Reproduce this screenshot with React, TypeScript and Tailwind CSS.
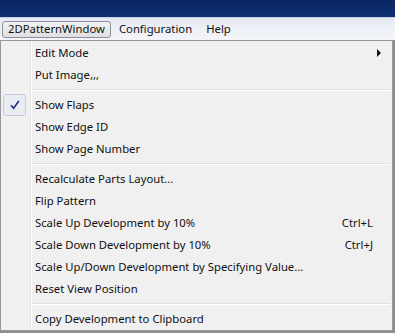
import React from "react";

type Item =
  | { kind: "item"; label: string; shortcut?: string; sub?: boolean; checked?: boolean }
  | { kind: "sep" };

const items: Item[] = [
  { kind: "item", label: "Edit Mode", sub: true },
  { kind: "item", label: "Put Image,,," },
  { kind: "sep" },
  { kind: "item", label: "Show Flaps", checked: true },
  { kind: "item", label: "Show Edge ID" },
  { kind: "item", label: "Show Page Number" },
  { kind: "sep" },
  { kind: "item", label: "Recalculate Parts Layout..." },
  { kind: "item", label: "Flip Pattern" },
  { kind: "item", label: "Scale Up Development by 10%", shortcut: "Ctrl+L" },
  { kind: "item", label: "Scale Down Development by 10%", shortcut: "Ctrl+J" },
  { kind: "item", label: "Scale Up/Down Development by Specifying Value..." },
  { kind: "item", label: "Reset View Position" },
  { kind: "sep" },
  { kind: "item", label: "Copy Development to Clipboard" },
];

export default function App() {
  return (
    <div
      className="relative w-[395px] h-[333px] overflow-hidden bg-[#8e8e8e] text-[11.3px] text-[#111]"
      style={{ fontFamily: '"Noto Sans", "Open Sans", sans-serif' }}
    >
      {/* title bar */}
      <div className="h-[17px] bg-gradient-to-b from-[#0b2763] to-[#0e3073]" />
      {/* menu bar */}
      <div className="h-[23px] flex items-center bg-gradient-to-b from-[#e4e9f3] via-[#edf0f7] to-[#f3f5fa] border-t border-[#c5d0e4] pl-[2px]">
        <div className="h-[17px] flex items-center px-[5px] rounded-[3px] border border-[#8a8f98] bg-gradient-to-b from-[#f2f2f2] to-[#e0e0e0] leading-none">
          2DPatternWindow
        </div>
        <div className="ml-[8px] leading-none">Configuration</div>
        <div className="ml-[14px] leading-none">Help</div>
      </div>
      {/* dropdown menu */}
      <div className="absolute left-0 top-[40px] w-[393px] h-[291px] border border-[#979797] bg-[#f0f0f0] pt-[1px]">
        <div className="absolute left-[29px] top-0 bottom-0 w-[1px] bg-[#e2e3e3]" />
        <div className="absolute left-[30px] top-0 bottom-0 w-[1px] bg-[#ffffff]" />
        <div className="relative flex flex-col">
          {items.map((it, i) =>
            it.kind === "sep" ? (
              <div key={i} className="h-[8px] flex flex-col justify-center pl-[31px] pr-[2px]">
                <div className="h-[1px] bg-[#e0e0e0]" />
                <div className="h-[1px] bg-[#ffffff]" />
              </div>
            ) : (
              <div key={i} className="relative h-[22px] flex items-center pl-[34px] pr-[19px] leading-none">
                {it.checked && (
                  <div className="absolute left-[2px] top-0 w-[23px] h-[22px] rounded-[3px] border border-[#c3cbdc] bg-[#e9ecf3] flex items-center justify-center">
                    <svg width="10" height="10" viewBox="0 0 10 10">
                      <path d="M1 5.2 L3.6 8.2 L8.8 1" fill="none" stroke="#1a2b80" strokeWidth="1.6" />
                    </svg>
                  </div>
                )}
                <span className="flex-1 whitespace-nowrap">{it.label}</span>
                {it.shortcut && <span className="whitespace-nowrap">{it.shortcut}</span>}
                {it.sub && (
                  <svg className="absolute right-[10px] top-[7px]" width="5" height="8" viewBox="0 0 5 8">
                    <path d="M0 0 L4 4 L0 8 Z" fill="#111" />
                  </svg>
                )}
              </div>
            )
          )}
        </div>
      </div>
    </div>
  );
}
